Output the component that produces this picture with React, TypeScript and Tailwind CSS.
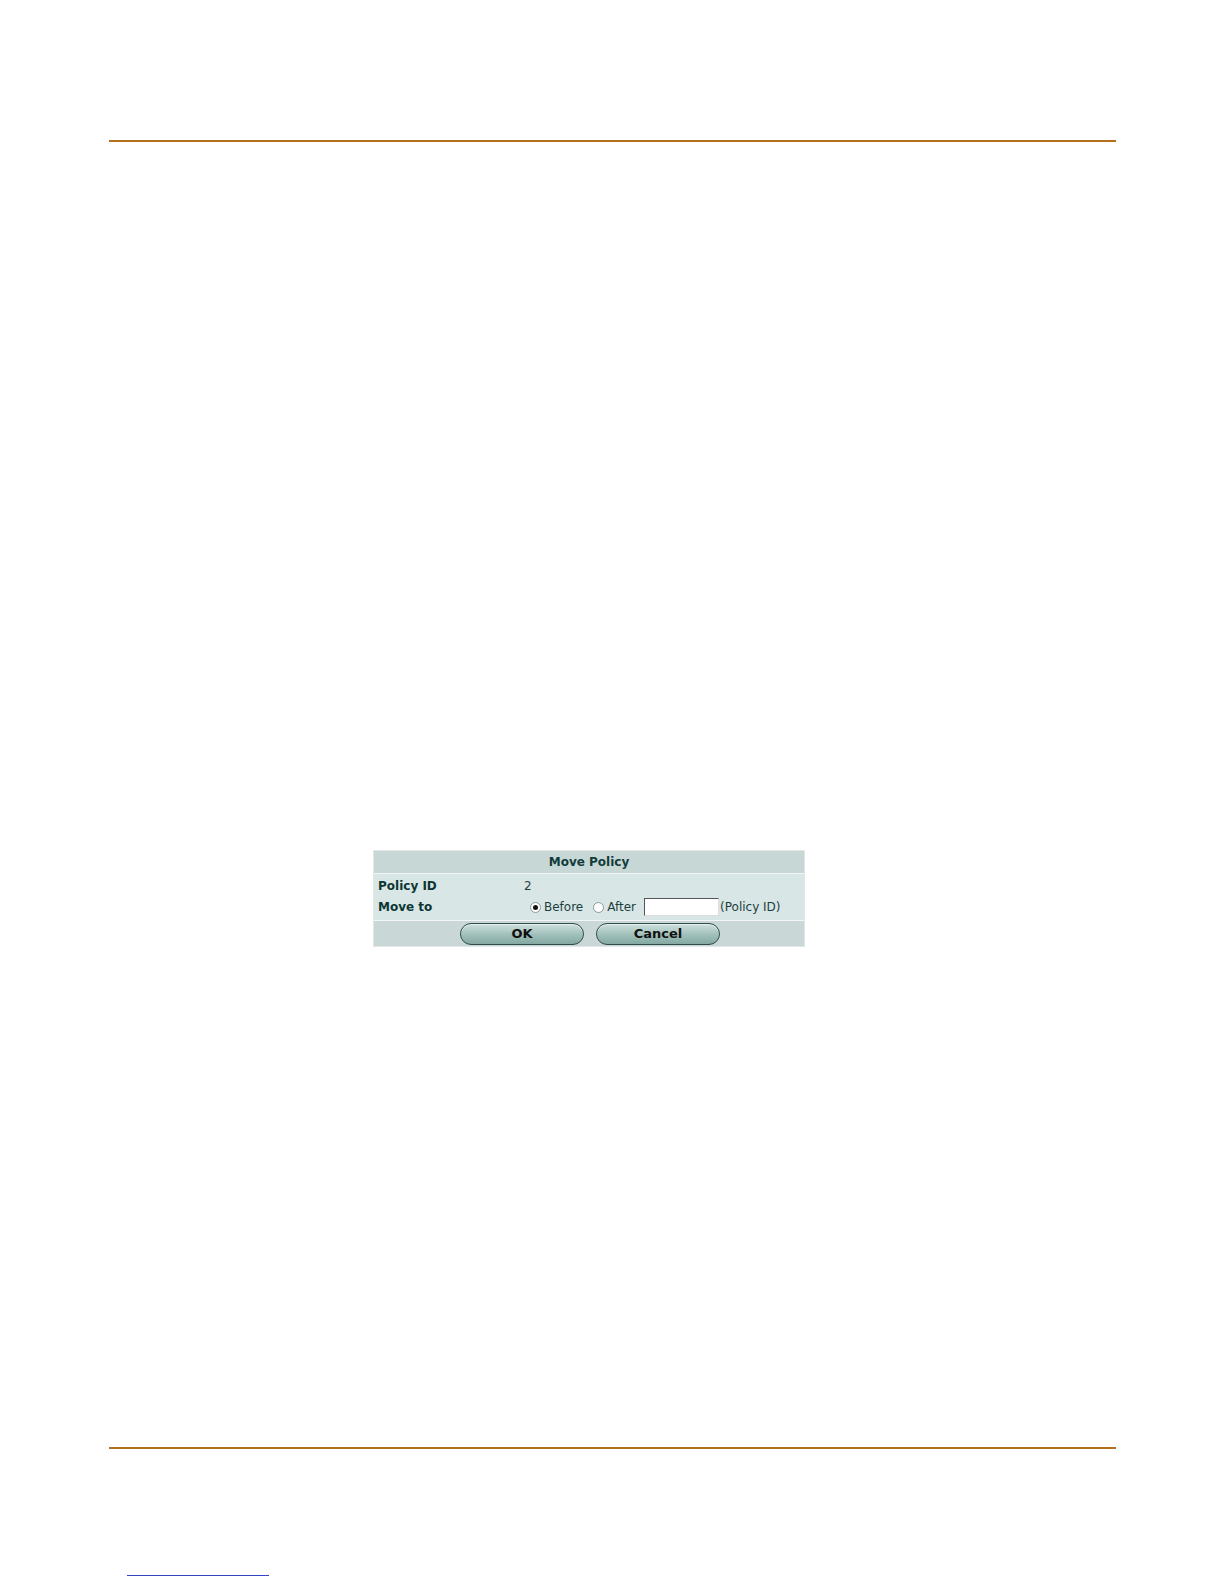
import React from 'react';

const font = { fontFamily: '"DejaVu Sans", Verdana, sans-serif' };

const Radio = ({ checked }: { checked?: boolean }) => (
    <span className="relative inline-flex h-[11px] w-[11px] items-center justify-center rounded-full border border-[#8a9a9a] bg-white">
        {checked && <span className="h-[5px] w-[5px] rounded-full bg-[#111]" />}
    </span>
);

const PillButton = ({ label }: { label: string }) => (
    <button
        type="button"
        className="flex h-[22px] w-[124px] items-center justify-center rounded-full border border-[#2f4a48] bg-gradient-to-b from-[#cfe0dc] via-[#a3c2bd] to-[#84a8a2] text-[13px] font-bold leading-none text-[#111] shadow-[inset_0_1px_0_#e6f0ee]"
    >
        {label}
    </button>
);

const MovePolicyDialog = () => (
    <div className="w-[432px] border border-[#e2e6e6] bg-[#e8eeee] text-[12px] text-[#0f3a3a]" style={font}>
        <div className="flex h-[22px] items-center justify-center bg-[#c7d7d6] font-bold text-[#123c3a]">Move Policy</div>
        <div className="h-px bg-[#f2f6f6]" />
        <div className="bg-[#d9e6e6] px-[4px] pt-[2px] pb-[2px]">
            <div className="flex h-[20px] items-center">
                <span className="w-[146px] font-bold text-[#0c3634]">Policy ID</span>
                <span className="text-[#1c3f3e]">2</span>
            </div>
            <div className="flex h-[22px] items-center">
                <span className="w-[152px] font-bold text-[#0c3634]">Move to</span>
                <label className="flex items-center gap-[3px] text-[#1c3f3e]">
                    <Radio checked />
                    <span>Before</span>
                </label>
                <label className="ml-[10px] flex items-center gap-[3px] text-[#1c3f3e]">
                    <Radio />
                    <span>After</span>
                </label>
                <input
                    className="ml-[8px] h-[18px] w-[75px] border border-t-[#555] border-l-[#555] border-r-[#ddd] border-b-[#ddd] bg-white outline-none"
                    defaultValue=""
                />
                <span className="ml-[1px] text-[#1c3f3e]">(Policy ID)</span>
            </div>
        </div>
        <div className="h-px bg-[#f2f6f6]" />
        <div className="flex h-[25px] items-center justify-center gap-[12px] bg-[#c9d7d6] pl-[2px]">
            <PillButton label="OK" />
            <PillButton label="Cancel" />
        </div>
    </div>
);

export default function App() {
    return (
        <div className="flex w-full flex-col bg-white">
            <div className="ml-[109px] mr-[108px] mt-[140px] h-[2px] bg-[#b36e1f]" />
            <div className="ml-[373px] mt-[708px]">
                <MovePolicyDialog />
            </div>
            <div className="ml-[109px] mr-[108px] mt-[500px] h-[2px] bg-[#b36e1f]" />
            <div className="ml-[127px] mt-[126px] h-px w-[142px] bg-[#3545c8]" />
        </div>
    );
}
